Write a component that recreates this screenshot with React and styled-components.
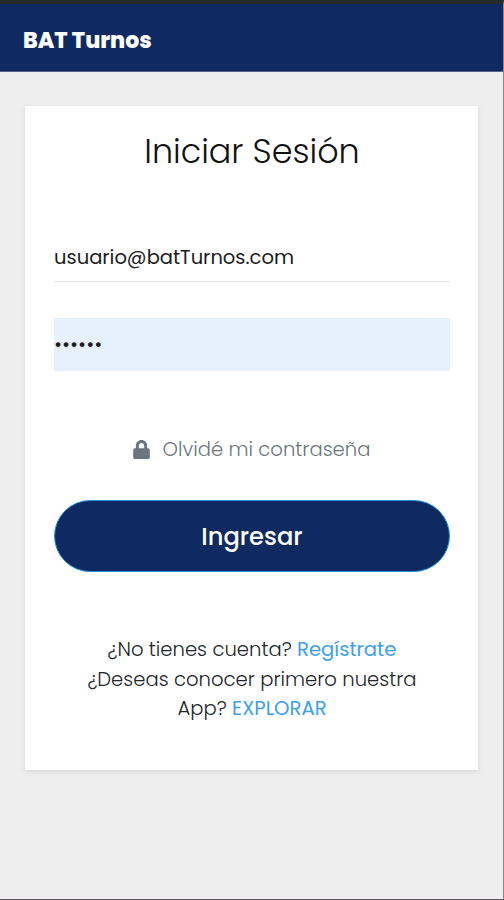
import React, { useState } from 'react';
import styled, { createGlobalStyle } from 'styled-components';
import { FaLock } from 'react-icons/fa';

const GlobalStyle = createGlobalStyle`
  * {
    box-sizing: border-box;
  }

  body {
    margin: 0;
    background: #eeeeee;
    color: #212529;
    font-family: Poppins, Inter, 'Open Sans', sans-serif;
  }
`;

const Screen = styled.div`
  display: flex;
  flex-direction: column;
  height: 900px;
  border-top: 4px solid #262b28;
  border-right: 1px solid #8a8a8a;
  border-bottom: 1px solid #5c5a5c;
`;

const Navbar = styled.header`
  display: flex;
  align-items: center;
  height: 68px;
  padding: 6px 23px 0;
  background: #0e2a60;
  border-bottom: 1px solid #56678f;
`;

const Brand = styled.span`
  color: #fff;
  font-size: 22px;
  font-weight: 800;
  line-height: 30px;
`;

const Card = styled.main`
  display: flex;
  flex-direction: column;
  height: 664px;
  margin: 34px 25px 0;
  padding: 24px 28px 0 29px;
  background: #fff;
  box-shadow: 0 2px 5px rgba(0, 0, 0, 0.09);
`;

const Title = styled.h1`
  margin: 0 0 61px;
  color: #111;
  font-size: 33.4px;
  font-weight: 300;
  line-height: 44px;
  text-align: center;
`;

const Field = styled.input`
  width: 100%;
  height: ${({ $filled }) => ($filled ? '53px' : '47px')};
  margin: 0 0 ${({ $filled }) => ($filled ? '63px' : '36px')};
  padding: 0 0 ${({ $filled }) => ($filled ? '0' : '2px')};
  border: 0;
  border-bottom: 1px solid ${({ $filled }) => ($filled ? '#e7f1fe' : '#e6e6e6')};
  border-radius: 0;
  outline: none;
  background: ${({ $filled }) => ($filled ? '#e7f1fe' : 'transparent')};
  color: #1c1c1c;
  font-family: inherit;
  font-size: 19.5px;
`;

const ForgotLink = styled.a`
  display: flex;
  align-items: center;
  justify-content: center;
  gap: 12px;
  height: 30px;
  margin: 0 2px 36px 0;
  color: #6c757d;
  font-size: 19.6px;
  font-weight: 300;
  text-decoration: none;
`;

const SubmitButton = styled.button`
  height: 72px;
  margin-bottom: 63px;
  padding: 0;
  border: 1px solid #2d8fdc;
  border-radius: 36px;
  background: #0e2a60;
  color: #fff;
  font-family: inherit;
  font-size: 24.2px;
  font-weight: 500;
`;

const Footer = styled.div`
  display: flex;
  flex-direction: column;
  align-items: center;
`;

const FooterLine = styled.span`
  font-size: 19.6px;
  font-weight: 300;
  line-height: 29.5px;
  white-space: nowrap;
`;

const Link = styled.a`
  color: #3ba0f3;
  font-weight: 400;
  text-decoration: none;
`;

function Login() {
  const [email, setEmail] = useState('usuario@batTurnos.com');
  const [password, setPassword] = useState('123456');

  return (
    <Card>
      <Title>Iniciar Sesión</Title>
      <Field
        type="email"
        value={email}
        onChange={(e) => setEmail(e.target.value)}
      />
      <Field
        $filled
        type="password"
        value={password}
        onChange={(e) => setPassword(e.target.value)}
      />
      <ForgotLink>
        <FaLock size="19px" />
        <span>Olvidé mi contraseña</span>
      </ForgotLink>
      <SubmitButton type="button">Ingresar</SubmitButton>
      <Footer>
        <FooterLine>
          ¿No tienes cuenta? <Link>Regístrate</Link>
        </FooterLine>
        <FooterLine>¿Deseas conocer primero nuestra</FooterLine>
        <FooterLine>
          App? <Link>EXPLORAR</Link>
        </FooterLine>
      </Footer>
    </Card>
  );
}

function App() {
  return (
    <>
      <GlobalStyle />
      <Screen>
        <Navbar>
          <Brand>BAT Turnos</Brand>
        </Navbar>
        <Login />
      </Screen>
    </>
  );
}

export default App;
